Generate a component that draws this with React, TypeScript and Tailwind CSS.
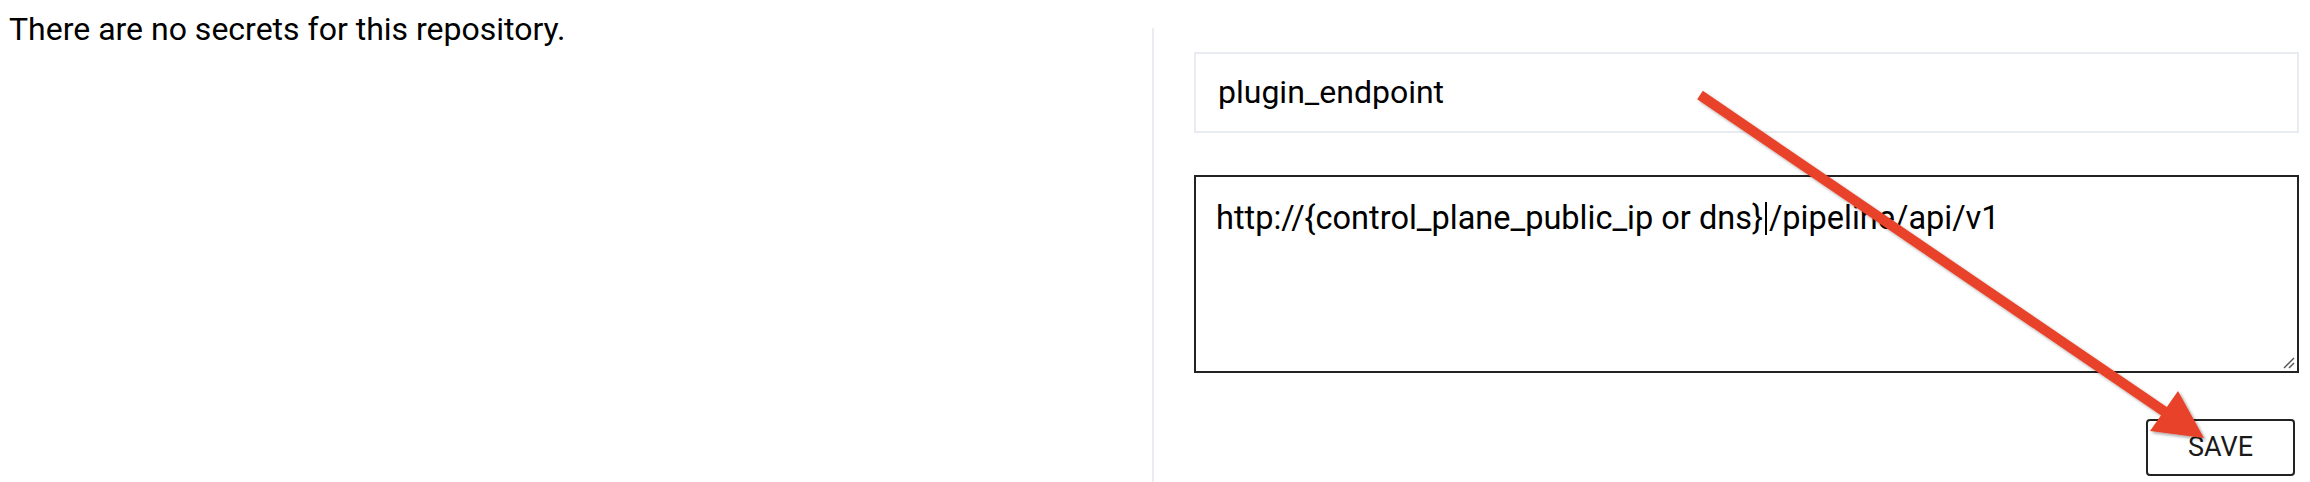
export default function App() {
  return (
    <div className="relative flex h-[482px] w-[2310px] overflow-hidden bg-white font-['Roboto',sans-serif] text-black">
      {/* Left */}
      <section className="w-[1152px] shrink-0 pl-[9px] pt-[11px]">
        <p className="text-[32px] leading-[37px]">There are no secrets for this repository.</p>
      </section>

      {/* Right */}
      <section className="mt-[28px] flex flex-1 flex-col border-l-2 border-[#e9edf2] pl-[40px] pr-[11px] pt-[24px]">
        <div className="flex h-[81px] items-center border-2 border-[#e8ecf0] px-[22px]">
          <span className="text-[32px] leading-[37px]">plugin_endpoint</span>
        </div>

        <div className="relative mt-[42px] h-[198px] border-2 border-[#222] px-[20px] pt-[19px]">
          <p className="text-[32.5px] leading-[37px]">
            http://{"{"}control_plane_public_ip or dns{"}"}
            <span className="mx-[2px] inline-block h-[33px] w-[2px] translate-y-[6px] bg-black align-baseline" />
            /pipeline/api/v1
          </p>
          <svg className="absolute bottom-[2px] right-[2px]" width="14" height="14" viewBox="0 0 14 14">
            <line x1="3" y1="13" x2="13" y2="3" stroke="#555" strokeWidth="1.5" />
            <line x1="8" y1="13" x2="13" y2="8" stroke="#555" strokeWidth="1.5" />
          </svg>
        </div>

        <div className="mt-[46px] flex justify-end pr-[4px]">
          <button className="h-[57px] w-[149px] rounded-[4px] border-2 border-[#222] text-[27px] text-[#1a1a1a]">
            SAVE
          </button>
        </div>
      </section>

      {/* Arrow annotation */}
      <svg className="pointer-events-none absolute inset-0" width="2310" height="482" viewBox="0 0 2310 482">
        <defs>
          <filter id="shadow" x="-10%" y="-10%" width="120%" height="120%">
            <feDropShadow dx="2" dy="2" stdDeviation="1.5" floodColor="#000" floodOpacity="0.35" />
          </filter>
        </defs>
        <g filter="url(#shadow)" fill="#e8432a" stroke="none">
          <line x1="1700" y1="95" x2="2171" y2="416" stroke="#e8432a" strokeWidth="10" />
          <polygon points="2204,438 2150,431 2178,391" />
        </g>
      </svg>
    </div>
  );
}
